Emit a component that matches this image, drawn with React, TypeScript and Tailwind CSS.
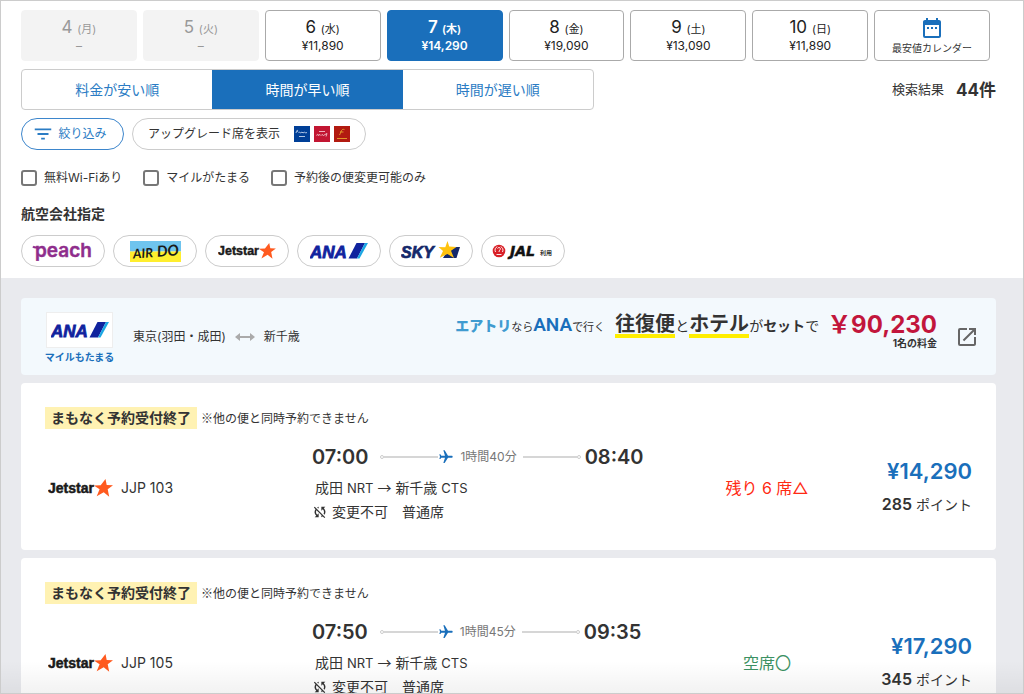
import type { ReactNode } from "react";
import { MdDateRange, MdFilterList, MdFlight, MdOpenInNew, MdSyncDisabled } from "react-icons/md";

const days = [
  { day: "4", week: "月", price: "" },
  { day: "5", week: "火", price: "" },
  { day: "6", week: "水", price: "¥11,890" },
  { day: "7", week: "木", price: "¥14,290" },
  { day: "8", week: "金", price: "¥19,090" },
  { day: "9", week: "土", price: "¥13,090" },
  { day: "10", week: "日", price: "¥11,890" },
];

const sorts = ["料金が安い順", "時間が早い順", "時間が遅い順"];

const options = ["無料Wi-Fiあり", "マイルがたまる", "予約後の便変更可能のみ"];

const flights = [
  { no: "JJP 103", dep: "07:00", arr: "08:40", time: "1時間40分", seats: "残り 6 席△", few: true, price: "¥14,290", point: "285" },
  { no: "JJP 105", dep: "07:50", arr: "09:35", time: "1時間45分", seats: "空席〇", few: false, price: "¥17,290", point: "345" },
];

/* LOGOS */

function PeachLogo() {
  return (
    <svg width="62" height="30" viewBox="0 0 62 30" aria-hidden="true">
      <text x="3" y="21" fill="#8f2d8c" stroke="#8f2d8c" strokeWidth="0.4" fontSize="19" className="font-['Inter'] font-semibold">peach</text>
      <path d="M1 10.500c1.200 1.300 2.500 1.300 4.500 1" stroke="#8f2d8c" strokeWidth="2" fill="none" />
    </svg>
  );
}

function AirdoLogo() {
  return (
    <svg width="51" height="21" viewBox="0 0 51 21" aria-hidden="true">
      <path d="M0 0h51v10.500H0z" fill="#6fc4ee" />
      <path d="M0 10.500h51V21H0z" fill="#ffee2e" />
      <g fill="#1a1a1a" className="font-['Lato'] font-bold italic" transform="rotate(-4 25 12)">
        <text x="3" y="16" fontSize="13">AIR</text>
        <text x="27" y="16" fontSize="15">DO</text>
      </g>
    </svg>
  );
}

function JetstarLogo({ className }: { className: string }) {
  return (
    <svg className={className} viewBox="0 0 65 18" aria-hidden="true">
      <text x="0" y="14" fontSize="14" fill="#1a1a1a" stroke="#1a1a1a" strokeWidth="0.5" className="font-['Liberation_Sans'] font-bold">Jetstar</text>
      <path d="M57.500 0l1.200 5.900 6.300.3-5.300 4 1.500 7.600-5.500-4.500-7 4 2.900-7-5.800-3.800 6.900-.2z" fill="#ff5a1f" />
    </svg>
  );
}

function AnaLogo() {
  return (
    <svg width="58" height="24" viewBox="0 0 58 24" aria-hidden="true">
      <text x="0" y="19" fontSize="17" fill="#10239e" stroke="#10239e" strokeWidth="0.8" className="font-['Liberation_Sans'] font-bold italic">ANA</text>
      <path d="M46.500 4H55l-8 15.500H38.500z" fill="#10239e" />
      <path d="M55 4h3l-8.500 15.500H47z" fill="#1ba7e3" />
    </svg>
  );
}

function SkyLogo() {
  return (
    <svg width="60" height="20" viewBox="0 0 60 20" aria-hidden="true">
      <text x="0" y="17" fontSize="16" fill="#14286a" stroke="#14286a" strokeWidth="0.7" className="font-['Liberation_Sans'] font-bold italic">SKY</text>
      <path d="M49 6h10l-3.500 11H42z" fill="#14286a" />
      <path d="M46.500 0l1.700 5.500 7.300.6-5.500 3.700 3 7.200-6.600-4.100-7.600 3.800 3.200-6.700-4.500-4 6.800.2z" fill="#ffc20e" />
    </svg>
  );
}

function JalLogo() {
  return (
    <svg width="62" height="18" viewBox="0 0 62 18" aria-hidden="true">
      <circle cx="7" cy="9" r="6.300" fill="#d81f26" />
      <path d="M3.500 10c-1.200-2.500 0-4.500 1.800-5.300M10.500 10c1.200-2.500 0-4.500-1.800-5.300M5.500 6.500l1.500-1.200 1.300 1c.6 1.300-1.300 1.800-1.300 3.700M4.500 12.500h5" stroke="#fff" strokeWidth=".9" fill="none" />
      <text x="18" y="14" fontSize="14" fill="#111" stroke="#111" strokeWidth="0.5" className="font-['DejaVu_Sans'] font-bold italic">JAL</text>
      <text x="48" y="13" fontSize="6" fill="#333" className="font-['Noto_Sans_CJK_JP'] font-bold">利用</text>
    </svg>
  );
}

const airlines: { name: string; logo: ReactNode }[] = [
  { name: "Peach", logo: <PeachLogo /> },
  { name: "AIRDO", logo: <AirdoLogo /> },
  { name: "Jetstar", logo: <JetstarLogo className="h-4 w-[58px]" /> },
  { name: "ANA", logo: <AnaLogo /> },
  { name: "SKYMARK", logo: <SkyLogo /> },
  { name: "JAL", logo: <JalLogo /> },
];

function SeatIcons() {
  return (
    <span className="flex gap-1">
      <svg width="16" height="16" viewBox="0 0 16 16" aria-hidden="true">
        <path d="M0 0h16v16H0z" fill="#003f97" />
        <path d="M2 7c1-4 2-3 1.500-1M4.500 6.500l1-.5 1 1 1.500-1 1 1 1.500-1 1 1 1.500-.5M5 10.500h6" stroke="#dbe6f7" strokeWidth=".8" fill="none" />
      </svg>
      <svg width="16" height="16" viewBox="0 0 16 16" aria-hidden="true">
        <path d="M0 0h16v16H0z" fill="#c21632" />
        <path d="M5 5.500h6M2.500 9.500c1-2 2-1 1.500 0l2-1 1 1 1-1 1.500 1 1.500-1 2-1-1 3" stroke="#f6d6db" strokeWidth=".8" fill="none" />
      </svg>
      <svg width="16" height="16" viewBox="0 0 16 16" aria-hidden="true">
        <path d="M0 0h16v16H0z" fill="#b21a10" />
        <path d="M5.500 9c1-1 1.500-5 3-5.500s1.500.5 2 0M6 6h3.500M3 12.500h10" stroke="#e8a52c" strokeWidth=".9" fill="none" />
      </svg>
    </span>
  );
}

function FlightCard({ flight }: { flight: (typeof flights)[number] }) {
  return (
    <article className="shrink-0 rounded bg-white px-6 pt-6 pb-[18px]">
      <div className="flex items-center leading-[22px]">
        <p className="bg-[#fff2b3] px-[6px] text-sm leading-[22px] font-bold">まもなく予約受付終了</p>
        <p className="ml-1 font-['Noto_Sans_CJK_JP',sans-serif] text-xs leading-[22px]">※他の便と同時予約できません</p>
      </div>

      <div className="mt-[15px] grid grid-cols-[267px_342px_1fr_92px] items-center">
        {/* AIRLINE */}
        <div className="flex items-center gap-2 pl-[3px] text-sm">
          <JetstarLogo className="h-[18px] w-[65px]" />
          {flight.no}
        </div>

        {/* ROUTE */}
        <div className="pb-[9px]">
          <div className="flex items-center">
            <span className="text-xl leading-[26px] font-semibold">{flight.dep}</span>
            <svg className="ml-3" width="58" height="6" viewBox="0 0 58 6" aria-hidden="true">
              <path d="M4 3h54" stroke="#d6d6d6" strokeWidth="2" />
              <circle cx="2" cy="3" r="1.500" fill="#fff" stroke="#ccc" />
            </svg>
            <MdFlight className="rotate-90 text-[#1a6fbb]" size={16} />
            <span className="mx-[6px] text-xs text-[#777]">{flight.time}</span>
            <svg className="mr-1" width="58" height="6" viewBox="0 0 58 6" aria-hidden="true">
              <path d="M0 3h54" stroke="#d6d6d6" strokeWidth="2" />
              <circle cx="56" cy="3" r="1.500" fill="#fff" stroke="#ccc" />
            </svg>
            <span className="text-xl leading-[26px] font-semibold">{flight.arr}</span>
          </div>
          <p className="mt-[6px] pl-[3px] text-sm leading-[22px]">
            成田 <span className="text-[13px]">NRT</span> <span className="font-['Noto_Sans_CJK_JP',sans-serif]">→</span> 新千歳 <span className="text-[13px]">CTS</span>
          </p>
          <p className="mt-[2px] flex items-center gap-1 text-sm leading-[22px]">
            <MdSyncDisabled size={16} />
            変更不可　普通席
          </p>
        </div>

        {/* SEATS */}
        <p className={flight.few ? "text-center text-base text-[#ff2a13]" : "text-center text-base text-[#3c9163]"}>{flight.seats}</p>

        {/* PRICE */}
        <div className="text-right whitespace-nowrap">
          <p className="text-[22px] leading-[34px] font-semibold text-[#1a6fbb]">{flight.price}</p>
          <p className="text-sm leading-[34px]"><b className="text-base font-semibold">{flight.point}</b> ポイント</p>
        </div>
      </div>
    </article>
  );
}

export default function App() {
  return (
    <div className="relative flex h-screen flex-col overflow-hidden border border-[#ccc] bg-[#e9eaee] font-['Inter','Noto_Sans_CJK_JP',sans-serif] text-[#333]">
      <header className="shrink-0 bg-white pt-[9px] pr-[27px] pb-[11px] pl-5">
        {/* DATES */}
        <div className="grid grid-cols-8 gap-[6px] pr-[6px]">
          {days.map((d) => {
            let look = "border-[#aaa] bg-white text-[#222]";
            if (!d.price) look = "border-[#f3f3f3] bg-[#f3f3f3] text-[#999]";
            if (d.day === "7") look = "border-[#1a6fbb] bg-[#1a6fbb] font-semibold text-white";
            return (
              <button key={d.day} type="button" disabled={!d.price} className={`h-[51px] rounded border ${look}`}>
                <span className="block text-[17px] leading-[18px]">{d.day} <span className="text-[11px]">({d.week})</span></span>
                <span className="block text-xs leading-4">{d.price || "–"}</span>
              </button>
            );
          })}
          <button type="button" className="flex h-[51px] flex-col items-center justify-center rounded border border-[#aaa]">
            <MdDateRange size={24} className="text-[#1a6fbb]" />
            <span className="text-[10px] leading-4">最安値カレンダー</span>
          </button>
        </div>

        {/* SORT */}
        <div className="mt-2 flex items-center justify-between">
          <div className="grid h-[41px] w-[573px] grid-cols-3 overflow-hidden rounded border border-[#ccc]">
            {sorts.map((s, i) => (
              <button key={s} type="button" className={i === 1 ? "-my-px bg-[#1a6fbb] text-sm text-white" : "text-sm text-[#2b7cc4]"}>
                {s}
              </button>
            ))}
          </div>
          <p className="flex items-center gap-3 text-[13px]">検索結果 <b className="text-[17px] leading-6">44件</b></p>
        </div>

        {/* FILTER */}
        <div className="mt-2 flex gap-2 text-xs">
          <button type="button" className="flex h-8 w-[103px] items-center justify-center gap-1 rounded-full border border-[#3d86cc] pr-[6px] text-[#2b7cc4]">
            <MdFilterList size={22} />
            絞り込み
          </button>
          <button type="button" className="flex h-8 items-center gap-[14px] rounded-full border border-[#ccc] px-[15px]">
            アップグレード席を表示
            <SeatIcons />
          </button>
        </div>

        <div className="mt-[18px] flex gap-[21px] text-xs leading-5">
          {options.map((o) => (
            <label key={o} className="flex items-center gap-[7px]">
              <input type="checkbox" className="size-4 appearance-none rounded-[3px] border-2 border-[#777] bg-white checked:bg-[#1a6fbb]" />
              {o}
            </label>
          ))}
        </div>

        {/* AIRLINES */}
        <h2 className="mt-4 text-sm leading-5 font-bold">航空会社指定</h2>
        <div className="mt-[11px] flex gap-2">
          {airlines.map((a) => (
            <button key={a.name} type="button" aria-label={a.name} className="flex h-8 w-[84px] items-center justify-center rounded-full border border-[#ccc]">
              {a.logo}
            </button>
          ))}
        </div>
      </header>

      <main className="flex min-h-0 flex-1 flex-col gap-2 overflow-hidden pt-5 pr-[27px] pl-5">
        {/* BANNER */}
        <a href="#" className="flex h-[77px] shrink-0 items-center rounded bg-[#f3f9fd] pr-[17px] pl-[25px]">
          <div className="w-[67px] pt-1 text-center">
            <div className="flex h-9 items-center justify-center border border-[#eee] bg-white">
              <AnaLogo />
            </div>
            <p className="flex justify-center text-[10px] leading-[18px] font-bold whitespace-nowrap text-[#1a6fbb]">マイルもたまる</p>
          </div>
          <div className="ml-5 flex items-center gap-2 text-xs">
            東京(羽田・成田)
            <svg width="22" height="10" viewBox="0 0 22 10" aria-hidden="true">
              <path d="M4 5h14" stroke="#aaa" strokeWidth="2" />
              <path d="M6 1v8L1 5zM16 1v8l5-4z" fill="#aaa" />
            </svg>
            新千歳
          </div>
          <div className="ml-auto flex items-baseline pb-[22px] text-[11px] leading-8 whitespace-nowrap">
            <b className="text-sm font-black text-[#3f9bd0]">エアトリ</b>
            なら
            <b className="font-['Roboto'] text-[19px] font-semibold text-[#1a6fbb]">ANA</b>
            で行く
            <b className="ml-[10px] border-b-4 border-[#ffee00] text-xl leading-5">往復便</b>
            <span className="text-sm">と</span>
            <b className="border-b-4 border-[#ffee00] text-xl leading-5">ホテル</b>
            <span className="text-sm">が<b>セット</b>で</span>
          </div>
          <div className="ml-2 pb-3 text-right font-bold text-[#c2163c]">
            <p className="text-2xl leading-6">￥90,230</p>
            <p className="text-[10px] leading-3 text-[#333]">1名の料金</p>
          </div>
          <MdOpenInNew size={24} className="ml-[18px] text-[#666]" />
        </a>

        {flights.map((f) => (
          <FlightCard key={f.no} flight={f} />
        ))}
      </main>

      <div className="pointer-events-none absolute inset-x-0 bottom-0 h-8 bg-linear-to-t from-black/5 to-transparent" />
    </div>
  );
}
